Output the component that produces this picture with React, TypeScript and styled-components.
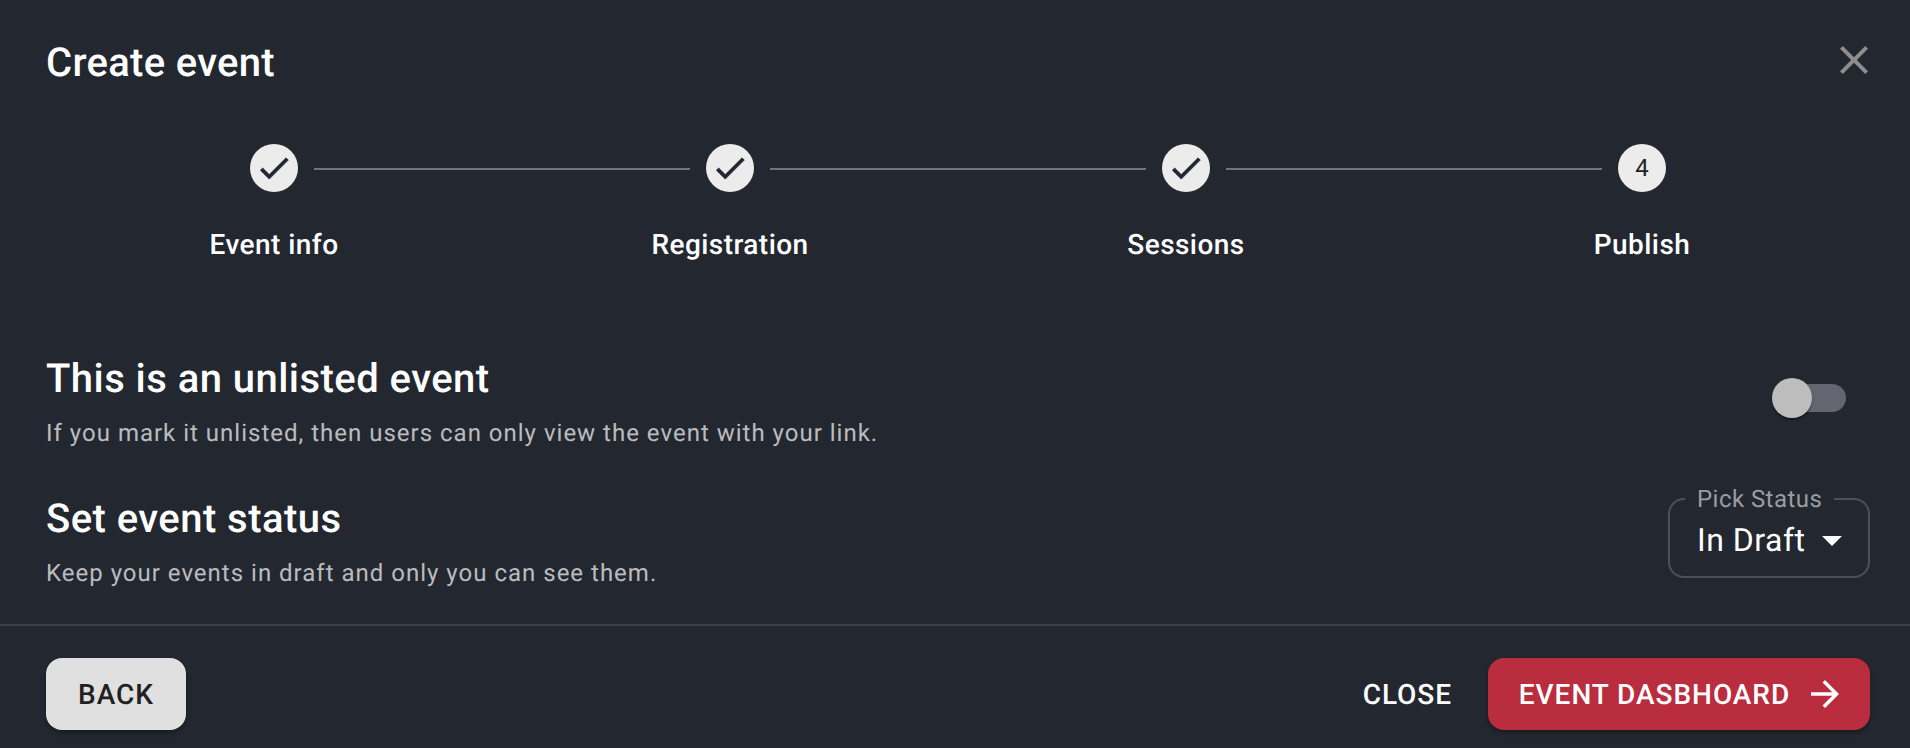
import React from "react";
import styled, { createGlobalStyle } from "styled-components";

const GlobalStyle = createGlobalStyle`
  html, body {
    margin: 0;
    padding: 0;
    background: #23272f;
  }
  * {
    box-sizing: border-box;
  }
`;

const steps = ["Event info", "Registration", "Sessions", "Publish"];

export default function App() {
  return (
    <>
      <GlobalStyle />
      <Dialog>
        <Header>
          <Title>Create event</Title>
          <CloseButton aria-label="close">
            <svg viewBox="0 0 24 24" width="48" height="48" fill="currentColor">
              <path d="M19 6.41 17.59 5 12 10.59 6.41 5 5 6.41 10.59 12 5 17.59 6.41 19 12 13.41 17.59 19 19 17.59 13.41 12z" />
            </svg>
          </CloseButton>
        </Header>
        <Stepper>
          {steps.map((label, i) => (
            <Step key={label}>
              <StepHead>
                <Connector $hidden={i === 0} />
                <StepCircle>
                  {i < 3 ? (
                    <svg viewBox="0 0 24 24" width="38" height="38" fill="currentColor" stroke="currentColor" strokeWidth="0.5">
                      <path d="M9 16.17 4.83 12l-1.42 1.41L9 19 21 7l-1.41-1.41z" />
                    </svg>
                  ) : (
                    <StepNumber>{i + 1}</StepNumber>
                  )}
                </StepCircle>
                <Connector $hidden={i === steps.length - 1} />
              </StepHead>
              <StepLabel>{label}</StepLabel>
            </Step>
          ))}
        </Stepper>
        <Content>
          <SettingRow>
            <SettingText>
              <SettingTitle>This is an unlisted event</SettingTitle>
              <SettingHint>If you mark it unlisted, then users can only view the event with your link.</SettingHint>
            </SettingText>
            <SwitchTrack>
              <SwitchThumb />
            </SwitchTrack>
          </SettingRow>
          <SettingRow>
            <SettingText>
              <SettingTitle>Set event status</SettingTitle>
              <SettingHint>Keep your events in draft and only you can see them.</SettingHint>
            </SettingText>
            <SelectField>
              <SelectLegend>Pick Status</SelectLegend>
              <SelectValue>In Draft</SelectValue>
              <svg viewBox="0 0 24 24" width="48" height="48" fill="#fff">
                <path d="m7 10 5 5 5-5z" />
              </svg>
            </SelectField>
          </SettingRow>
        </Content>
        <Footer>
          <BackButton>Back</BackButton>
          <FooterActions>
            <TextButton>Close</TextButton>
            <PrimaryButton>
              Event dasbhoard
              <svg viewBox="0 0 24 24" width="42" height="42" fill="currentColor">
                <path d="m12 4-1.41 1.41L16.17 11H4v2h12.17l-5.58 5.59L12 20l8-8z" />
              </svg>
            </PrimaryButton>
          </FooterActions>
        </Footer>
      </Dialog>
    </>
  );
}

const Dialog = styled.div`
  width: 1910px;
  height: 748px;
  overflow: hidden;
  display: flex;
  flex-direction: column;
  background: #23272f;
  color: #fff;
  font-family: Roboto, "Liberation Sans", sans-serif;
  text-rendering: geometricPrecision;
`;

const Header = styled.header`
  height: 120px;
  padding: 28px 32px 0 46px;
  display: flex;
  justify-content: space-between;
  align-items: flex-start;
`;

const Title = styled.h1`
  margin: 0;
  font-size: 40px;
  font-weight: 500;
  line-height: 70px;
  letter-spacing: 0.3px;
`;

const CloseButton = styled.button`
  width: 48px;
  height: 48px;
  margin-top: 8px;
  padding: 0;
  border: none;
  background: none;
  color: #8e8e8e;
`;

const Stepper = styled.div`
  margin: 24px 40px 0 46px;
  display: flex;
`;

const Step = styled.div`
  flex: 1;
  display: flex;
  flex-direction: column;
  align-items: center;
`;

const StepHead = styled.div`
  width: 100%;
  display: flex;
  align-items: center;
  gap: 16px;
`;

const Connector = styled.span<{ $hidden?: boolean }>`
  flex: 1;
  height: 2px;
  margin-top: 2px;
  background: ${({ $hidden }) => ($hidden ? "transparent" : "#757575")};
`;

const StepCircle = styled.div`
  width: 48px;
  height: 48px;
  flex: none;
  border-radius: 50%;
  background: #ececec;
  color: #23272f;
  display: flex;
  align-items: center;
  justify-content: center;
`;

const StepNumber = styled.span`
  font-size: 24px;
  line-height: 1;
  color: #222;
`;

const StepLabel = styled.div`
  margin-top: 33px;
  font-size: 28px;
  font-weight: 500;
  line-height: 40px;
  letter-spacing: 0.45px;
`;

const Content = styled.div`
  padding: 86px 40px 0 46px;
  flex: 1;
  display: flex;
  flex-direction: column;
  gap: 40px;
`;

const SettingRow = styled.div`
  display: flex;
  justify-content: space-between;
  align-items: flex-start;
`;

const SettingText = styled.div`
  display: flex;
  flex-direction: column;
`;

const SettingTitle = styled.h2`
  margin: 0;
  font-size: 40px;
  font-weight: 500;
  line-height: 56px;
  letter-spacing: 0.45px;
`;

const SettingHint = styled.p`
  margin: 8px 0 0;
  font-size: 24px;
  line-height: 36px;
  letter-spacing: 1px;
  color: rgba(255, 255, 255, 0.7);
`;

const SwitchTrack = styled.div`
  position: relative;
  width: 68px;
  height: 28px;
  margin: 33px 24px 0 0;
  border-radius: 14px;
  background: #636670;
`;

const SwitchThumb = styled.div`
  position: absolute;
  top: -6px;
  left: -6px;
  width: 40px;
  height: 40px;
  border-radius: 50%;
  background: #bdbdbd;
  box-shadow: 0 2px 2px rgba(0, 0, 0, 0.4);
`;

const SelectField = styled.fieldset`
  width: 202px;
  height: 91px;
  margin: -4px 0 0;
  padding: 0 12px 8px 27px;
  border: 2px solid #4d5058;
  border-radius: 16px;
  display: flex;
  align-items: center;
`;

const SelectLegend = styled.legend`
  margin-left: -12px;
  padding: 0 12px;
  font-size: 24px;
  line-height: 24px;
  color: #9b9da1;
  letter-spacing: 0.45px;
  white-space: nowrap;
`;

const SelectValue = styled.span`
  font-size: 32px;
  line-height: 46px;
  letter-spacing: 0.5px;
  flex: 1;
`;

const Footer = styled.footer`
  height: 124px;
  flex: none;
  padding: 32px 40px 0 46px;
  border-top: 2px solid #3c3f47;
  display: flex;
  justify-content: space-between;
  align-items: flex-start;
`;

const FooterActions = styled.div`
  display: flex;
  align-items: center;
  gap: 36px;
`;

const BaseButton = styled.button`
  height: 72px;
  border: none;
  border-radius: 16px;
  font-family: inherit;
  font-size: 28px;
  font-weight: 500;
  letter-spacing: 0.95px;
  text-transform: uppercase;
  text-rendering: geometricPrecision;
  display: inline-flex;
  align-items: center;
  justify-content: center;
`;

const BackButton = styled(BaseButton)`
  width: 140px;
  background: #e0e0e0;
  color: #212121;
  box-shadow: 0 3px 4px rgba(0, 0, 0, 0.3);
`;

const TextButton = styled(BaseButton)`
  background: none;
  color: #fff;
  padding: 0;
`;

const PrimaryButton = styled(BaseButton)`
  width: 382px;
  gap: 14px;
  padding-left: 13px;
  background: #b92d3e;
  color: #fff;
  box-shadow: 0 3px 4px rgba(0, 0, 0, 0.3);
`;
